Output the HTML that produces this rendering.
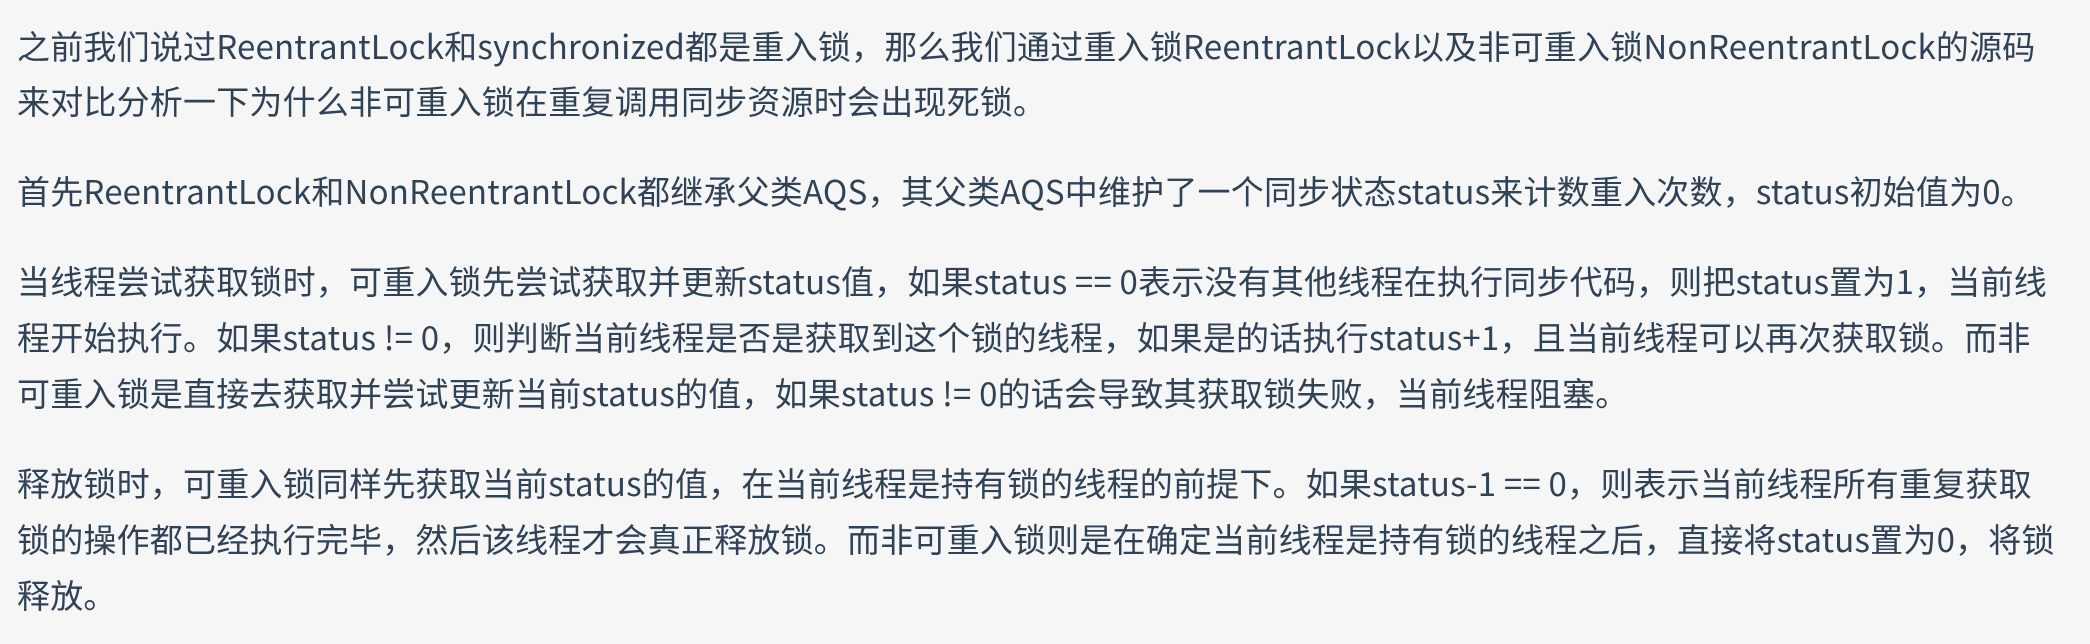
<!DOCTYPE html>
<html><head><meta charset="utf-8"><style>
html,body{margin:0;padding:0;}
body{width:2090px;height:644px;overflow:hidden;background:#f6f6f7;position:relative;
font-family:"Liberation Sans Narrow","Noto Sans CJK SC",sans-serif;color:#2f4256;font-size:33px;letter-spacing:0.2px;}
.l{position:absolute;left:17px;white-space:nowrap;line-height:56px;height:56px;}
</style></head><body>
<div class="l" style="top:17px">之前我们说过ReentrantLock和synchronized都是重入锁，那么我们通过重入锁ReentrantLock以及非可重入锁NonReentrantLock的源码</div>
<div class="l" style="top:72px">来对比分析一下为什么非可重入锁在重复调用同步资源时会出现死锁。</div>
<div class="l" style="top:162px">首先ReentrantLock和NonReentrantLock都继承父类AQS，其父类AQS中维护了一个同步状态status来计数重入次数，status初始值为0。</div>
<div class="l" style="top:252px">当线程尝试获取锁时，可重入锁先尝试获取并更新status值，如果status == 0表示没有其他线程在执行同步代码，则把status置为1，当前线</div>
<div class="l" style="top:308px">程开始执行。如果status != 0，则判断当前线程是否是获取到这个锁的线程，如果是的话执行status+1，且当前线程可以再次获取锁。而非</div>
<div class="l" style="top:364px">可重入锁是直接去获取并尝试更新当前status的值，如果status != 0的话会导致其获取锁失败，当前线程阻塞。</div>
<div class="l" style="top:454px">释放锁时，可重入锁同样先获取当前status的值，在当前线程是持有锁的线程的前提下。如果status-1 == 0，则表示当前线程所有重复获取</div>
<div class="l" style="top:510px">锁的操作都已经执行完毕，然后该线程才会真正释放锁。而非可重入锁则是在确定当前线程是持有锁的线程之后，直接将status置为0，将锁</div>
<div class="l" style="top:566px">释放。</div>
</body></html>
